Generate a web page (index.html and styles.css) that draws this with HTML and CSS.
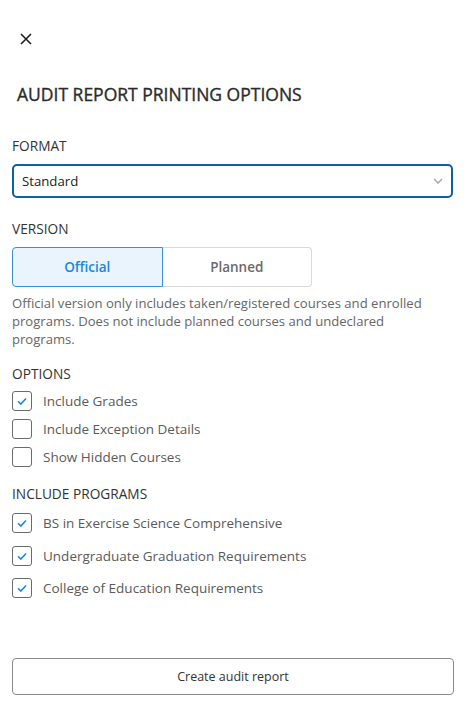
FILE: index.html
```
<!DOCTYPE html>
<html>
<head>
<meta charset="utf-8">
<link rel="stylesheet" href="styles.css">
</head>
<body>
<div class="panel">
  <button class="close" aria-label="Close">
    <svg width="12" height="12" viewBox="0 0 12 12"><path d="M1 1L11 11M11 1L1 11" stroke="#1f1f1f" stroke-width="1.6" fill="none"/></svg>
  </button>
  <h1 class="title">AUDIT REPORT PRINTING OPTIONS</h1>

  <div class="label label-format">FORMAT</div>
  <div class="select">
    <span>Standard</span>
    <svg class="chev" width="10" height="6" viewBox="0 0 10 6"><path d="M1 1L5 5L9 1" stroke="#a8a8a8" stroke-width="1.5" fill="none"/></svg>
  </div>

  <div class="label label-version">VERSION</div>
  <div class="seg">
    <div class="seg-btn active">Official</div>
    <div class="seg-btn">Planned</div>
  </div>
  <p class="desc">Official version only includes taken/registered courses and enrolled programs. Does not include planned courses and undeclared programs.</p>

  <div class="label label-options">OPTIONS</div>
  <div class="opts">
    <div class="row"><span class="cb checked"><svg width="12" height="10" viewBox="0 0 12 10"><path d="M2 5.2L4.8 8L10 2.5" stroke="#1d87db" stroke-width="1.6" fill="none"/></svg></span><span>Include Grades</span></div>
    <div class="row"><span class="cb"></span><span>Include Exception Details</span></div>
    <div class="row"><span class="cb"></span><span>Show Hidden Courses</span></div>
  </div>

  <div class="label label-programs">INCLUDE PROGRAMS</div>
  <div class="progs">
    <div class="row"><span class="cb checked"><svg width="12" height="10" viewBox="0 0 12 10"><path d="M2 5.2L4.8 8L10 2.5" stroke="#1d87db" stroke-width="1.6" fill="none"/></svg></span><span>BS in Exercise Science Comprehensive</span></div>
    <div class="row"><span class="cb checked"><svg width="12" height="10" viewBox="0 0 12 10"><path d="M2 5.2L4.8 8L10 2.5" stroke="#1d87db" stroke-width="1.6" fill="none"/></svg></span><span>Undergraduate Graduation Requirements</span></div>
    <div class="row"><span class="cb checked"><svg width="12" height="10" viewBox="0 0 12 10"><path d="M2 5.2L4.8 8L10 2.5" stroke="#1d87db" stroke-width="1.6" fill="none"/></svg></span><span>College of Education Requirements</span></div>
  </div>

  <button class="create">Create audit report</button>
</div>
</body>
</html>
```
FILE: styles.css
```
* { box-sizing: border-box; }
html, body { margin: 0; padding: 0; background: #fff; }
body {
  font-family: "Open Sans", "Noto Sans", sans-serif;
  color: #333;
  width: 474px;
  height: 716px;
  overflow: hidden;
}
.panel {
  padding: 0 21px 0 12px;
  display: flex;
  flex-direction: column;
}
.close {
  margin: 33px 0 0 8px;
  padding: 0;
  width: 12px;
  height: 12px;
  border: 0;
  background: none;
  display: block;
  line-height: 0;
}
.title {
  margin: 37px 0 0 5px;
  font-size: 17.5px;
  line-height: 24px;
  font-weight: 400;
  color: #2b2b2b;
  letter-spacing: 0;
  -webkit-text-stroke: 0.35px #2b2b2b;
}
.label {
  font-size: 13.7px;
  line-height: 20px;
  color: #333;
}
.label-format { margin-top: 30px; }
.select {
  margin-top: 8px;
  height: 34px;
  border: 2px solid #0f5ea8;
  border-radius: 5px;
  display: flex;
  align-items: center;
  justify-content: space-between;
  padding: 0 8px 0 8px;
  font-size: 13.2px;
  color: #222;
}
.label-version { margin-top: 21px; }
.seg {
  margin-top: 8px;
  display: flex;
  width: 300px;
  height: 40px;
}
.seg-btn {
  flex: 1;
  display: flex;
  align-items: center;
  justify-content: center;
  font-size: 13.5px;
  font-weight: 600;
  color: #6a6a6a;
  border: 1px solid #d9d9d9;
  border-left: 0;
  border-radius: 0 4px 4px 0;
  background: #fff;
}
.seg-btn.active {
  color: #1d87db;
  background: #e9f4fd;
  border: 1px solid #3b8fd8;
  border-radius: 4px 0 0 4px;
}
.desc {
  margin: 7px 0 0;
  max-width: 435px;
  font-size: 13.1px;
  line-height: 18px;
  color: #666;
}
.label-options { margin-top: 16px; }
.opts { margin-top: 3px; }
.opts .row { height: 28px; }
.label-programs { margin-top: 13px; }
.progs { margin-top: 3px; }
.progs .row { height: 32.5px; }
.row {
  display: flex;
  align-items: center;
  gap: 11px;
  font-size: 13.5px;
  color: #5a5a5a;
}
.cb {
  width: 20px;
  height: 20px;
  border: 1px solid #6b6b6b;
  border-radius: 3px;
  display: flex;
  align-items: center;
  justify-content: center;
  flex: none;
}
.create {
  margin-top: 53px;
  height: 37px;
  border: 1px solid #8a8a8a;
  border-radius: 4px;
  background: #fff;
  font-family: inherit;
  font-size: 12.5px;
  color: #333;
  width: 442px;
}
```
